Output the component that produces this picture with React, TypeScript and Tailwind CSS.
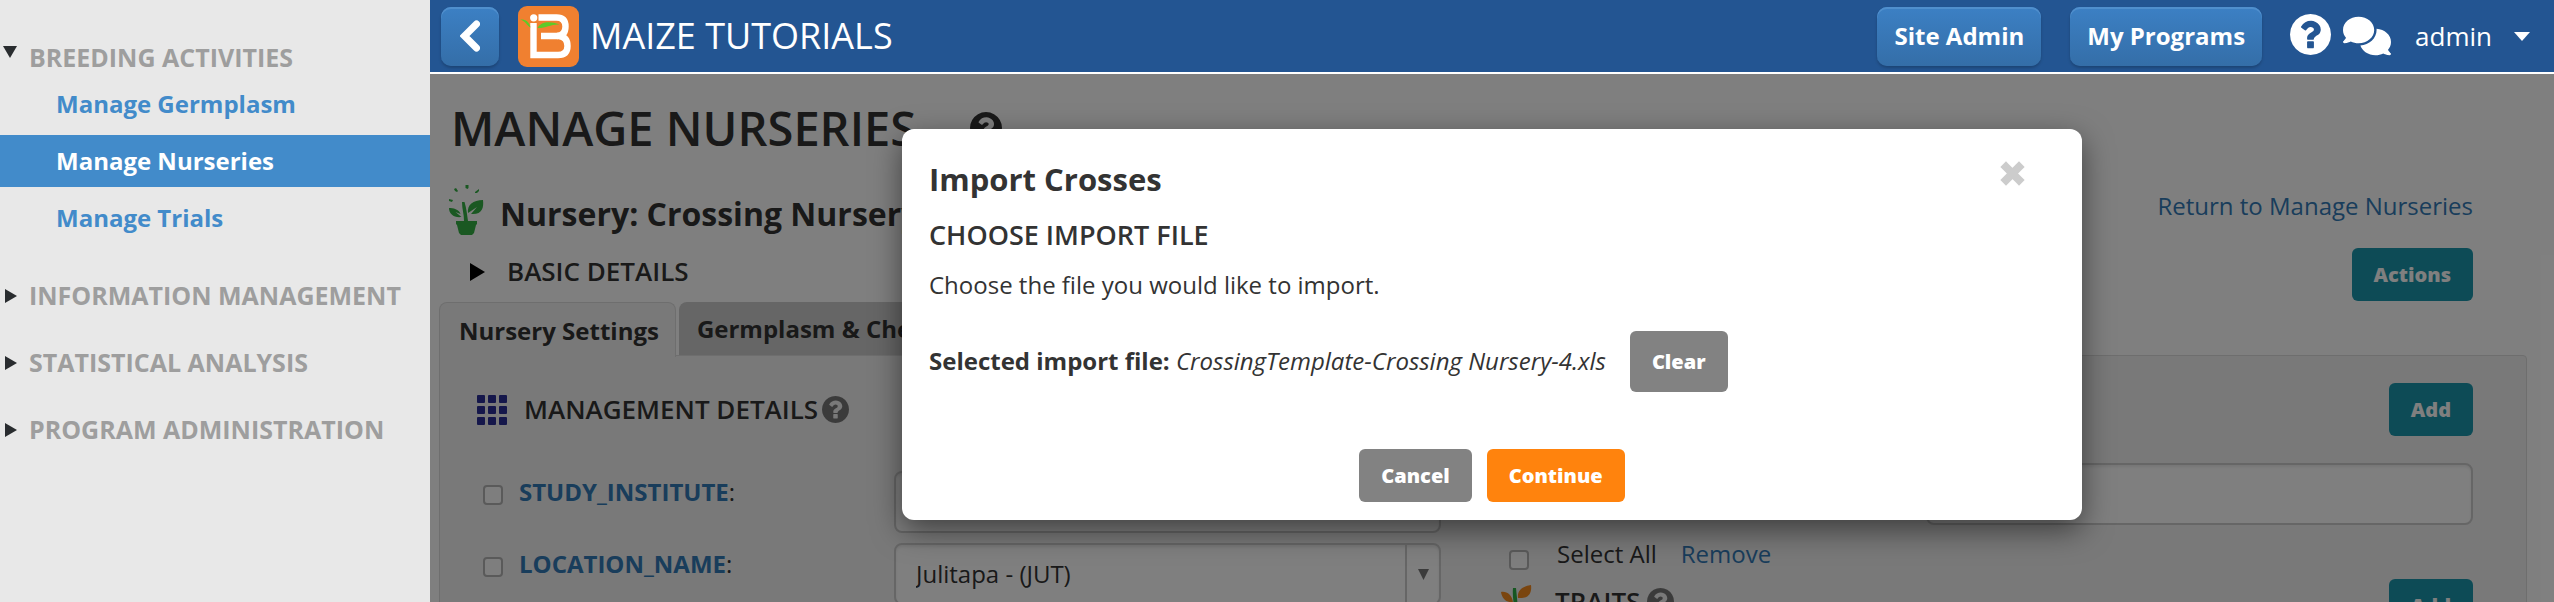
import { FaComments } from "react-icons/fa6";

const otherSections = ["INFORMATION MANAGEMENT", "STATISTICAL ANALYSIS", "PROGRAM ADMINISTRATION"];

const breedingLinks = [
  { label: "Manage Germplasm", active: false },
  { label: "Manage Nurseries", active: true },
  { label: "Manage Trials", active: false },
];

function ArrowRight({ className }: { className: string }) {
  return (
    <svg viewBox="0 0 12 14" className={className} fill="currentColor" preserveAspectRatio="none" aria-hidden="true">
      <path d="M0 0 12 7 0 14Z" />
    </svg>
  );
}

function ArrowDown({ className }: { className: string }) {
  return (
    <svg viewBox="0 0 14 12" className={className} fill="currentColor" preserveAspectRatio="none" aria-hidden="true">
      <path d="M0 0H14L7 12Z" />
    </svg>
  );
}

function HelpIcon({ className }: { className: string }) {
  return (
    <svg viewBox="0 128 1536 1536" className={className} fill="currentColor" aria-hidden="true">
      <path d="M896 1376v-192q0-14-9-23t-23-9h-192q-14 0-23 9t-9 23v192q0 14 9 23t23 9h192q14 0 23-9t9-23zM1152 704q0-88-55.500-163t-138.500-116t-170-41q-243 0-371 213q-15 24 8 42l132 100q7 6 19 6q16 0 25-12q53-68 86-92q34-24 86-24q48 0 85.500 26t37.500 59q0 38-20 61t-68 45q-63 28-115.500 86.500t-52.500 125.500v36q0 14 9 23t23 9h192q14 0 23-9t9-23q0-19 21.500-49.500t54.500-49.500q32-18 49-28.500t46-35t44.500-48t28-60.500t12.500-81zM1536 896q0 209-103 385.500t-279.500 279.500t-385.500 103t-385.500-103t-279.500-279.500t-103-385.500t103-385.500t279.500-279.500t385.500-103t385.500 103t279.500 279.500t103 385.500z" />
    </svg>
  );
}

function Logo() {
  return (
    <svg viewBox="0 0 61 61" className="ml-[19px] size-[61px]" aria-hidden="true">
      <rect width="61" height="61" rx="9" fill="#f08030" />
      <circle cx="15.700" cy="11.800" r="3.600" fill="#fff" />
      <g fill="none" stroke="#fff" strokeWidth="6.400">
        <path d="M15.500 17V49H40Q49.500 49 49.500 40T41 30H23" />
        <path d="M20.500 11.500H38.500Q47.500 11.500 47.500 20.500T39 30" />
      </g>
      <path d="M2 13.500c5-.5 9 1.500 10.500 8C9 20 8 15 2 13.500Z" fill="#5ccb28" />
      <path d="M19.500 22c4-6.500 12-7 22-3.500-9-.5-14 4-22 3.500Z" fill="#5ccb28" />
    </svg>
  );
}

function NurseryIcon() {
  return (
    <svg viewBox="0 0 36 52" className="h-[52px] w-9" fill="#34b045" aria-hidden="true">
      <path d="M17.500 1h3v3l-1 1-2-1zM6 5l2-1 2 3-1 1-2-1zM27 8l4-3v2l-2 2h-2zM1 15l4 1-1 2-3-1z" />
      <path d="M14 18h2.500c2 6 2.500 13 3.500 19h-4c0-7-2-12-2-19Z" />
      <path d="M1 24c4 0 10 1 11.500 6l-5-2 6 5C6 34 1 30 1 24ZM35 16c1 8-1 15-12 14l6-7-9 6c-1-8 5-13 15-13Z" />
      <path d="M8 37h21v3l-1 1-2 8-2 2H13l-2-2-2-8-1-1Z" />
    </svg>
  );
}

function TraitsIcon() {
  return (
    <svg viewBox="0 0 34 36" className="h-9 w-[34px]" aria-hidden="true">
      <path d="M13 4h3c1 10 2 20 3 32h-4c0-12-3-22-2-32Z" fill="#2fae44" />
      <path d="M1 8c6-1 11 3 12 10C7 19 2 15 1 8ZM31 1c1 8-2 14-13 13C17 6 23 2 31 1Z" fill="#f58a1f" />
    </svg>
  );
}

function GridIcon() {
  return (
    <svg viewBox="0 0 30 30" className="size-[30px]" fill="#2a2f96" aria-hidden="true">
      {[0, 11, 22].map((y) => [0, 11, 22].map((x) => <rect key={`${x}-${y}`} x={x} y={y} width="8" height="8" rx="1" />))}
    </svg>
  );
}

function Sidebar() {
  return (
    <nav className="w-[430px] shrink-0 bg-[#e8e8e8] pt-8 font-bold text-[#9e9e9e]">
      <div className="flex h-[46px] pl-[3px] text-[25px] leading-[50px]">
        <ArrowDown className="mr-3 mt-[14px] h-3 w-[14px] text-[#292c2f]" />
        BREEDING ACTIVITIES
      </div>
      <ul className="mb-[18px] flex flex-col gap-[5px] text-[24px] leading-[52px]">
        {breedingLinks.map((link) => (
          <li key={link.label}>
            <a
              href="#"
              className={link.active ? "block bg-[#428bca] pl-14 text-white" : "block pl-14 text-[#428bca]"}
            >
              {link.label}
            </a>
          </li>
        ))}
      </ul>
      {otherSections.map((label) => (
        <div key={label} className="flex h-[67px] items-center pl-[5px] text-[25px]">
          <ArrowRight className="mr-3 h-[14px] w-3 text-[#292c2f]" />
          {label}
        </div>
      ))}
    </nav>
  );
}

const navButton =
  "h-[59px] rounded-[10px] bg-linear-to-b from-[#3c80c4] to-[#346ea8] text-[24px] font-bold text-white shadow-[inset_0_2px_0_#508fcd,0_2px_3px_rgba(0,0,0,0.2)]";

function TopBar() {
  return (
    <header className="flex h-[74px] shrink-0 items-center border-b-2 border-white bg-[#235592] pl-[11px] pr-6 text-white">
      <button type="button" aria-label="Back" className={`${navButton} flex w-[58px] items-center justify-center`}>
        <svg viewBox="0 0 20 32" className="h-8 w-5" fill="none" stroke="currentColor" strokeWidth="7" strokeLinecap="round" aria-hidden="true">
          <path d="M16.500 4 4.500 16l12 12" />
        </svg>
      </button>
      <Logo />
      <span className="ml-[11px] text-[36px]">MAIZE TUTORIALS</span>
      <button type="button" className={`${navButton} ml-auto px-[17px]`}>Site Admin</button>
      <button type="button" className={`${navButton} ml-[29px] px-[17px]`}>My Programs</button>
      <HelpIcon className="mb-1 ml-7 size-[41px]" />
      <FaComments className="ml-3 size-12" />
      <button type="button" className="ml-6 flex items-center gap-[22px] text-[26px]">
        admin
        <ArrowDown className="h-[9px] w-4" />
      </button>
    </header>
  );
}

const tealButton = "h-[53px] rounded-md bg-[#1a96ac] px-[22px] text-[20px] font-extrabold text-white";
const checkbox = "size-5 appearance-none rounded-[4px] border-2 border-[#b4b4b4] bg-[#fcfcfc]";
const field = "h-[62px] rounded-lg border-2 border-[#ccc] bg-white shadow-[inset_0_2px_3px_rgba(0,0,0,0.08)]";

function StudyPage() {
  return (
    <main className="px-[9px] pb-6 text-[24px] text-[#333]">
      <h1 className="flex h-[108px] items-center pl-3 text-[47px] font-semibold">
        MANAGE NURSERIES
        <HelpIcon className="ml-[54px] size-8" />
      </h1>
      <div className="flex">
        <div className="grow">
          <h2 className="-mt-[6px] flex h-[68px] items-center gap-4 pl-[9px] text-[32px] font-bold">
            <NurseryIcon />
            <span className="pt-2">Nursery: Crossing Nursery</span>
          </h2>
          <h3 className="flex h-[55px] items-center gap-[22px] pl-[31px] text-[26px] font-semibold">
            <ArrowRight className="h-[18px] w-[15px] text-black" />
            BASIC DETAILS
          </h3>
        </div>
        <div className="flex flex-col items-end pr-[72px] pt-[6px]">
          <a href="#" className="text-[#337ab7]">Return to Manage Nurseries</a>
          <button type="button" className={`${tealButton} mt-6`}>Actions</button>
        </div>
      </div>

      <div role="tablist" className="flex gap-[3px] pt-px font-bold leading-[50px]">
        <button type="button" role="tab" aria-selected="true" className="z-10 -mb-[2px] h-[55px] rounded-t-lg border border-b-0 border-[#ddd] bg-[#f2f2f2] pl-[19px] pr-4 pt-[2px]">
          Nursery Settings
        </button>
        <button type="button" role="tab" aria-selected="false" className="h-[53px] rounded-t-lg bg-[#ccc] px-[18px]">
          Germplasm &amp; Checks
        </button>
      </div>

      <div className="mr-[18px] flex rounded-tr border border-[#ddd] bg-[#f2f2f2] pb-10">
        <section className="w-[1001px] shrink-0 pl-[37px]">
          <h3 className="mb-2 flex h-[107px] items-center text-[26px] font-semibold">
            <GridIcon />
            <span className="ml-[17px] mr-1">MANAGEMENT DETAILS</span>
            <HelpIcon className="size-[27px] text-[#777]" />
          </h3>
          <div className="mb-[10px] flex h-[62px] items-center">
            <input id="institute" type="checkbox" className={`${checkbox} mb-[14px] ml-[6px] mr-4`} />
            <label htmlFor="institute" className="w-[375px] pb-5">
              <span className="font-bold text-[#337ab7]">STUDY_INSTITUTE</span>:
            </label>
            <input type="text" aria-label="Study institute value" className={`${field} grow`} />
          </div>
          <div className="flex h-[62px] items-center">
            <input id="location" type="checkbox" className={`${checkbox} mb-[14px] ml-[6px] mr-4`} />
            <label htmlFor="location" className="w-[375px] pb-5">
              <span className="font-bold text-[#337ab7]">LOCATION_NAME</span>:
            </label>
            <div className={`${field} flex grow items-stretch`}>
              <select aria-label="Location" className="grow appearance-none pl-5 outline-none">
                <option>Julitapa - (JUT)</option>
              </select>
              <span className="flex w-[34px] items-center justify-center border-l-2 border-[#ccc]">
                <ArrowDown className="size-[11px] text-[#777]" />
              </span>
            </div>
          </div>
        </section>
        <section className="grow pl-[59px] pr-[53px]">
          <div className="flex h-[107px] items-center justify-between">
            <h3 className="text-[26px] font-semibold">SELECTION STRATEGY</h3>
            <button type="button" className={tealButton}>Add</button>
          </div>
          <div className="flex justify-end">
            <input type="text" aria-label="Strategy value" className={`${field} w-[547px]`} />
          </div>
          <div className="flex h-[54px] items-center pt-1">
            <input id="select-all" type="checkbox" className={`${checkbox} ml-[9px] mr-7 mt-3`} />
            <label htmlFor="select-all">Select All</label>
            <a href="#" className="ml-6 text-[#337ab7]">Remove</a>
          </div>
          <div className="flex h-[53px] items-center justify-between">
            <div className="flex items-center pb-2">
              <TraitsIcon />
              <h3 className="ml-[21px] mr-[7px] text-[26px] font-semibold">TRAITS</h3>
              <HelpIcon className="size-[27px] text-[#777]" />
            </div>
            <button type="button" className={tealButton}>Add</button>
          </div>
        </section>
      </div>
    </main>
  );
}

const dialogButton = "rounded-md px-[22px] text-[20px] font-extrabold text-white";

function ImportDialog() {
  return (
    <div
      role="dialog"
      aria-label="Import Crosses"
      className="absolute left-[472px] top-[55px] w-[1180px] rounded-xl bg-white px-[27px] pb-[18px] pt-7 text-[24px] text-[#333] shadow-[0_10px_30px_rgba(0,0,0,0.5)]"
    >
      <div className="flex h-11 items-center justify-between text-[31px] font-bold">
        <h2>Import Crosses</h2>
        <button type="button" aria-label="Close" className="mb-3 mr-[30px]">
          <svg viewBox="0 0 25 25" className="size-[25px]" stroke="#ccc" strokeWidth="8" strokeLinecap="square" aria-hidden="true">
            <path d="M6 6 19 19M19 6 6 19" />
          </svg>
        </button>
      </div>
      <h3 className="mt-[14px] h-10 text-[27px] font-semibold leading-10">CHOOSE IMPORT FILE</h3>
      <p className="mt-3 leading-9">Choose the file you would like to import.</p>
      <div className="mt-7 flex items-center">
        <p className="mr-6 pb-[2px]">
          <strong>Selected import file:</strong> <em>CrossingTemplate-Crossing Nursery-4.xls</em>
        </p>
        <button type="button" className={`${dialogButton} h-[61px] bg-[#828282]`}>Clear</button>
      </div>
      <div className="mt-[57px] flex justify-center gap-[15px]">
        <button type="button" className={`${dialogButton} h-[53px] bg-[#828282]`}>Cancel</button>
        <button type="button" className={`${dialogButton} h-[53px] bg-[#ff830d]`}>Continue</button>
      </div>
    </div>
  );
}

export default function App() {
  return (
    <div className="flex h-screen overflow-hidden font-['Open_Sans',sans-serif]">
      <Sidebar />
      <div className="flex min-w-0 grow flex-col">
        <TopBar />
        <div className="relative min-h-0 grow overflow-hidden bg-white">
          <StudyPage />
          <div className="absolute inset-0 z-20 bg-black/50" />
          <div className="absolute inset-0 z-30">
            <ImportDialog />
          </div>
        </div>
      </div>
    </div>
  );
}
